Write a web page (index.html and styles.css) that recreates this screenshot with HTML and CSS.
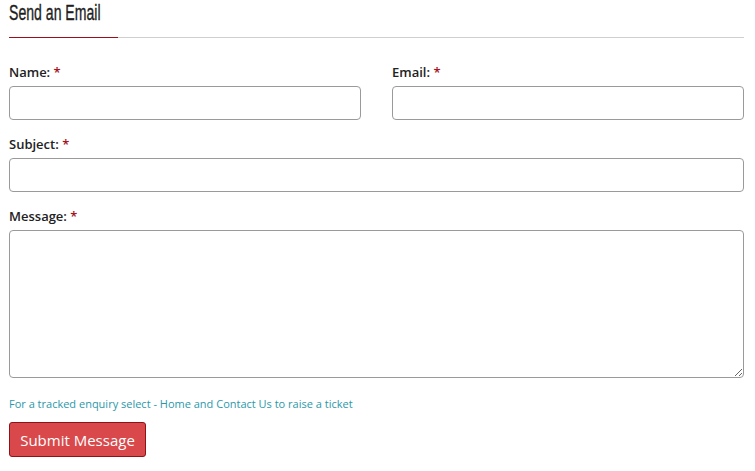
FILE: index.html
```html
<!DOCTYPE html>
<html>
<head>
<meta charset="utf-8">
<link rel="stylesheet" href="styles.css">
</head>
<body>
<div class="wrap">
  <h2 class="title"><span class="title-text">Send an Email</span></h2>
  <div class="rule"><span class="rule-accent"></span></div>
  <form class="form">
    <div class="row two">
      <div class="field">
        <label class="label">Name: <span class="req">*</span></label>
        <input class="input" type="text">
      </div>
      <div class="field">
        <label class="label">Email: <span class="req">*</span></label>
        <input class="input" type="text">
      </div>
    </div>
    <div class="field">
      <label class="label">Subject: <span class="req">*</span></label>
      <input class="input" type="text">
    </div>
    <div class="field">
      <label class="label">Message: <span class="req">*</span></label>
      <textarea class="textarea"></textarea>
    </div>
    <p class="note">For a tracked enquiry select - Home and Contact Us to raise a ticket</p>
    <button class="btn" type="button">Submit Message</button>
  </form>
</div>
</body>
</html>
```
FILE: styles.css
```css
html, body { margin: 0; padding: 0; background: #fff; }
body { font-family: "Open Sans", "DejaVu Sans", sans-serif; color: #222; }
.wrap { padding: 0 11px 0 9px; }
.title {
  font-family: "Liberation Sans", Arial, sans-serif;
  font-weight: normal;
  font-size: 22px;
  line-height: 24px;
  margin: 1px 0 0 0;
  color: #1e1e1e;
  height: 24px;
}
.title-text {
  display: inline-block;
  transform: scaleX(0.64);
  transform-origin: left center;
  white-space: nowrap;
  -webkit-text-stroke: 0.35px #1e1e1e;
}
.rule { height: 1px; background: #cfcfcf; margin-top: 12px; display: flex; }
.rule-accent { width: 109px; height: 1px; background: #9b0f1a; }
.form { margin-top: 25px; }
.row.two { display: grid; grid-template-columns: 1fr 1fr; column-gap: 31px; }
.field { display: flex; flex-direction: column; margin-bottom: 15px; }
.label { font-size: 13px; font-weight: 600; line-height: 18px; margin-bottom: 5px; color: #222; }
.req { color: #a3141c; }
.input, .textarea {
  box-sizing: border-box;
  width: 100%;
  border: 1px solid #9a9a9a;
  border-radius: 4px;
  background: #fff;
  font: inherit;
  margin: 0;
}
.input { height: 34px; }
.textarea { height: 148px; resize: vertical; display: block; }
.note { font-size: 11px; color: #2b98aa; margin: 18px 0 0 0; line-height: 15px; }
.btn {
  margin-top: 11px;
  width: 137px;
  height: 35px;
  background: #d9484a;
  border: 1px solid #8e1218;
  border-radius: 3px;
  color: #fff;
  font-family: "Open Sans", "DejaVu Sans", sans-serif;
  font-size: 15px;
  padding: 0;
}
```
